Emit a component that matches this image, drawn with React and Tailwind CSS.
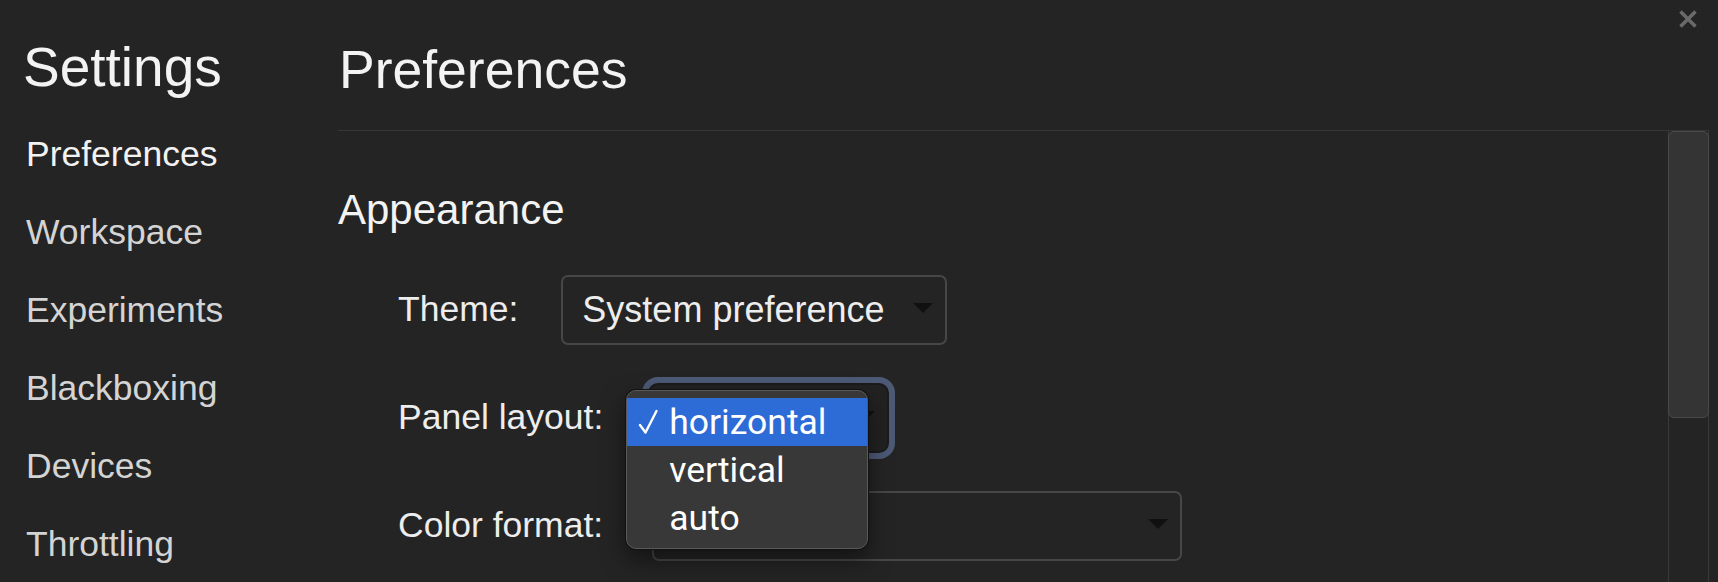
import React from 'react';

const sidebarItems = ['Preferences', 'Workspace', 'Experiments', 'Blackboxing', 'Devices', 'Throttling'];

const layoutOptions = ['horizontal', 'vertical', 'auto'];

const Caret = () => (
  <svg width="20" height="10" viewBox="0 0 20 10" className="-mt-[5px] ml-auto shrink-0">
    <path d="M0 0H20L10 10Z" fill="#101010" />
  </svg>
);

const Check = () => (
  <svg width="20" height="26" viewBox="0 0 20 26" className="shrink-0">
    <path d="M2 16L7.5 23.5L18.5 2" fill="none" stroke="#ffffff" strokeWidth="2.4" strokeLinecap="round" strokeLinejoin="round" />
  </svg>
);

// value is left out where the open popup hides it
const SelectBox = ({ className, value }) => (
  <div className={`flex h-[70px] items-center rounded-[7px] border-2 pl-[19px] pr-[12px] text-[36px] text-[#ededed] ${className}`}>
    {value && <span>{value}</span>}
    <Caret />
  </div>
);

const LayoutPopup = () => (
  <div className="absolute left-[-22px] top-[7px] z-10 w-[242px] rounded-[10px] border border-[#5a5a5a] bg-[#383838] pb-[6px] pt-[7px] shadow-[0_0_0_1px_#121212,0_10px_24px_rgba(0,0,0,0.5)] font-['Roboto',sans-serif]">
    {layoutOptions.map((opt, i) => (
      <div
        key={opt}
        className={`flex h-[48px] items-center text-[35.5px] leading-[48px] text-white ${i === 0 ? 'bg-[#2d6bd6]' : ''}`}
      >
        <div className="w-[42px] pl-[11px]">{i === 0 && <Check />}</div>
        <span>{opt}</span>
      </div>
    ))}
  </div>
);

export default function App() {
  return (
    <div className="relative flex h-[582px] w-full overflow-hidden bg-[#242424] font-['Liberation_Sans',Arial,sans-serif] text-[#ededed]">
      {/* Sidebar */}
      <aside className="w-[338px] shrink-0 pl-[23px] pt-[40px]">
        <h1 className="text-[55px] leading-[54px] text-[#f3f3f3]">Settings</h1>
        <nav className="mt-[21px]">
          {sidebarItems.map((item, i) => (
            <div
              key={item}
              className={`h-[78px] pl-[3px] text-[35.5px] leading-[78px] ${i === 0 ? 'text-[#f2f2f2]' : 'text-[#d4d4d4]'}`}
            >
              {item}
            </div>
          ))}
        </nav>
      </aside>

      {/* Main */}
      <main className="flex min-w-0 flex-1 flex-col pr-[9px]">
        <header className="border-b border-[#363636] pb-[33px] pt-[43px]">
          <h2 className="pl-[1px] text-[53.5px] leading-[54px] text-[#f3f3f3]">Preferences</h2>
        </header>

        <div className="flex min-h-0 flex-1">
          <section className="flex-1 pt-[58px]">
            <h3 className="text-[42px] leading-[42px] text-[#f3f3f3]">Appearance</h3>

            <div className="mt-[44px] flex flex-col gap-[38px] pl-[60px]">
              <div className="flex items-center gap-[43px]">
                <span className="text-[35.5px]">Theme:</span>
                <SelectBox className="w-[386px] border-[#474747] bg-[#242424]" value="System preference" />
              </div>

              <div className="flex items-center gap-[45px]">
                <span className="text-[35.5px]">Panel layout:</span>
                <div className="relative">
                  <SelectBox className="w-[241px] rounded-[10px] border-[#1b1b1b] bg-[#222222] shadow-[0_0_0_6px_#4d5a76]" />
                  <LayoutPopup />
                </div>
              </div>

              <div className="flex items-center gap-[49px]">
                <span className="text-[35.5px]">Color format:</span>
                <SelectBox className="w-[530px] border-[#474747] bg-[#242424]" />
              </div>
            </div>
          </section>

          {/* Scrollbar */}
          <div className="w-[41px] shrink-0 border-x border-[#3a3a3a]">
            <div className="-mx-px h-[287px] rounded-[6px] border border-[#4a4a4a] bg-[#343434]" />
          </div>
        </div>
      </main>

      {/* Close */}
      <button className="absolute right-[20px] top-[9px] h-[20px] w-[20px]">
        <svg width="20" height="20" viewBox="0 0 20 20">
          <path d="M2.5 2.5L17.5 17.5M17.5 2.5L2.5 17.5" stroke="#6a6a6a" strokeWidth="3.5" />
        </svg>
      </button>
    </div>
  );
}
